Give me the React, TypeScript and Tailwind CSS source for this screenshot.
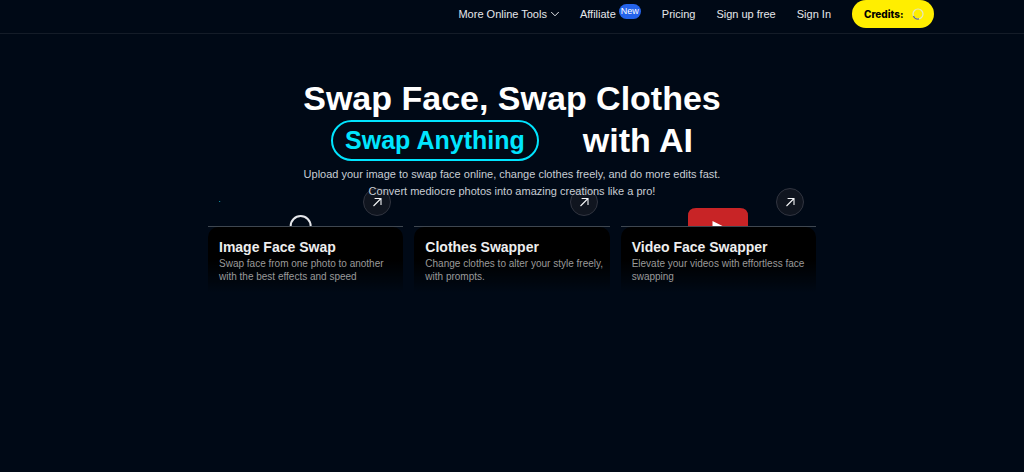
import type { ReactNode } from 'react'

const LINKS = ['Pricing', 'Sign up free', 'Sign In']

const CARDS = [
  {
    id: 'image',
    title: 'Image Face Swap',
    text: 'Swap face from one photo to another with the best effects and speed',
    media: <LoadingRing />,
  },
  {
    id: 'clothes',
    title: 'Clothes Swapper',
    text: 'Change clothes to alter your style freely, with prompts.',
    media: null,
  },
  {
    id: 'video',
    title: 'Video Face Swapper',
    text: 'Elevate your videos with effortless face swapping',
    media: <PlayBadge />,
  },
]

function App() {
  return (
    <div className="min-h-screen bg-[#000916] font-['Liberation_Sans',Arial,sans-serif] text-white">
      <Header />
      <main className="mx-auto w-full max-w-[608px] pt-[43px]">
        <Hero />
        <section className="-mt-3 grid grid-cols-3 gap-[11px]">
          {CARDS.map((card) => (
            <ToolCard key={card.id} title={card.title} text={card.text} media={card.media} />
          ))}
        </section>
      </main>
    </div>
  )
}

function Header() {
  return (
    <header className="border-b border-[#141c28]">
      <nav className="flex h-[33px] items-start justify-end gap-[21px] pr-[90px] text-[11px] leading-7 text-[#e5e7eb]">
        <button type="button" className="flex items-center gap-1">
          More Online Tools
          <svg className="h-2 w-2" viewBox="0 0 8 8" fill="none" stroke="currentColor" strokeLinecap="round" strokeLinejoin="round">
            <path d="M.5 2.300 4 5.800l3.500-3.500" />
          </svg>
        </button>
        <a href="#affiliate" className="flex items-start gap-[3px]">
          Affiliate
          <span className="mt-1 rounded-full bg-[#2563eb] px-[2px] text-[9px] leading-[15px] font-medium text-white">
            New
          </span>
        </a>
        {LINKS.map((link) => (
          <a key={link} href="#">
            {link}
          </a>
        ))}
        <button
          type="button"
          className="flex h-7 w-[82px] items-center justify-between rounded-full bg-[#ffee00] pr-[10px] pl-3 font-[Inter,sans-serif] text-[10px] font-extrabold text-black"
        >
          Credits:
          <svg className="h-3 w-3" viewBox="0 0 12 12" fill="none">
            <circle cx="6" cy="6" r="5" stroke="#e5e7c0" strokeWidth="1.2" />
            <path d="M1.400 8A5 5 0 0 0 7 10.900" stroke="#6b7280" strokeWidth="1.2" />
          </svg>
        </button>
      </nav>
    </header>
  )
}

function Hero() {
  return (
    <div className="relative z-10 flex flex-col items-center text-center">
      <h1 className="text-[34px] leading-[42px] font-bold">
        Swap Face, Swap Clothes
        <span className="flex items-center justify-center gap-11">
          <span className="rounded-full border-2 border-[#00e5ff] px-3 text-[25px] leading-[37px] text-[#00e5ff]">
            Swap Anything
          </span>
          with AI
        </span>
      </h1>
      <p className="mt-[5px] text-[11px] leading-[17px] text-[#c8cdd4]">
        Upload your image to swap face online, change clothes freely, and do more edits fast.
        <br />
        Convert mediocre photos into amazing creations like a pro!
      </p>
    </div>
  )
}

function ToolCard({ title, text, media }: { title: string; text: string; media: ReactNode }) {
  return (
    <a href="#" className="relative block">
      <div className="flex h-[39px] items-end justify-center overflow-hidden border-b border-[#3f4750]">
        {media}
      </div>
      <span className="absolute top-0 right-3 flex h-7 w-7 items-center justify-center rounded-full border border-[#30343f] bg-[#10151f]">
        <svg className="h-[10px] w-[10px]" viewBox="0 0 10 10" fill="none" stroke="#f3f4f6" strokeWidth="1.1">
          <path d="M1.500 9 9 1.500M2.600 1.500H9v6.400" />
        </svg>
      </span>
      <div className="h-[66px] rounded-t-[10px] bg-linear-to-b from-black from-50% to-transparent pt-3 pr-1 pl-[11px]">
        <h2 className="text-sm leading-4 font-bold text-[#eeeeee]">{title}</h2>
        <p className="mt-[2px] text-[10px] leading-[13px] text-[#9a9a9a]">{text}</p>
      </div>
    </a>
  )
}

function LoadingRing() {
  return (
    <svg className="h-[38px] w-full" viewBox="0 0 195 38" fill="none">
      <path d="M11 13.500h1" stroke="#0e9fb4" />
      <circle cx="92.500" cy="38" r="10" stroke="#e5e7eb" strokeWidth="2" />
    </svg>
  )
}

function PlayBadge() {
  return (
    <svg className="h-[18px] w-[60px]" viewBox="0 0 60 18">
      <path d="M0 18V8Q0 0 8 0h44q8 0 8 8v10z" fill="#c82426" />
      <path d="M24.500 13 35.500 18.500h-11z" fill="#fff" />
    </svg>
  )
}

export default App
